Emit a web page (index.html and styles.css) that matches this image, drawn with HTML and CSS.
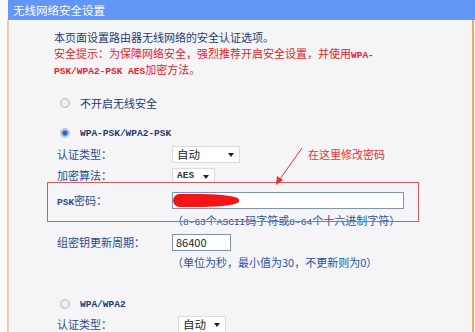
FILE: index.html
```html
<!DOCTYPE html>
<html lang="zh-CN">
<head>
    <meta charset="UTF-8">
    <meta name="viewport" content="width=device-width, initial-scale=1.0">
    <title>无线网络安全设置</title>
    <link rel="stylesheet" href="styles.css">
</head>
<body>
    <div class="title-bar">无线网络安全设置</div>

    <div class="panel">
        <div class="intro">
            <p>本页面设置路由器无线网络的安全认证选项。</p>
            <p class="warn">安全提示：为保障网络安全，强烈推荐开启安全设置，并使用<span class="mono">WPA-</span></p>
            <p class="warn"><span class="mono">PSK/WPA2-PSK AES</span>加密方法。</p>
        </div>

        <div class="radio-row first">
            <span class="radio"></span>
            <span>不开启无线安全</span>
        </div>

        <div class="radio-row second">
            <span class="radio checked"></span>
            <span class="mono">WPA-PSK/WPA2-PSK</span>
        </div>

        <div class="field-row auth">
            <span class="label">认证类型：</span>
            <span class="select wide">自动<i class="caret"></i></span>
        </div>

        <div class="field-row enc">
            <span class="label">加密算法：</span>
            <span class="select narrow"><span class="mono">AES</span><i class="caret"></i></span>
        </div>

        <div class="field-row psk">
            <span class="label"><span class="mono">PSK</span>密码：</span>
            <span class="input long"><span class="scribble"></span></span>
        </div>

        <div class="hint-row">（<span class="mono">8-63</span>个<span class="mono">ASCII</span>码字符或<span class="mono">8-64</span>个十六进制字符）</div>

        <div class="field-row gk">
            <span class="label">组密钥更新周期：</span>
            <span class="input short">86400</span>
        </div>

        <div class="hint-row">（单位为秒，最小值为30，不更新则为0）</div>

        <div class="radio-row third">
            <span class="radio"></span>
            <span class="mono">WPA/WPA2</span>
        </div>

        <div class="field-row auth2">
            <span class="label">认证类型：</span>
            <span class="select mid">自动<i class="caret"></i></span>
        </div>
    </div>

    <!-- annotation drawn on top of the form -->
    <div class="mark-box"></div>
    <div class="mark-text">在这里修改密码</div>
    <svg class="mark-arrow" width="475" height="332" viewBox="0 0 475 332">
        <line x1="302" y1="148" x2="280" y2="179" stroke="#e8312e" stroke-width="1"/>
        <polygon points="276,185 277,176 283,180" fill="#e8312e"/>
    </svg>
</body>
</html>
```

FILE: styles.css
```css
* {
    margin: 0;
    padding: 0;
    box-sizing: border-box;
}
html, body {
    height: 100%;
}
body {
    position: relative;
    overflow: hidden;
    background: #fafafa;
    font-family: "Noto Sans CJK SC", "Liberation Sans", sans-serif;
    font-size: 11px;
    color: #24438a;
}
.mono {
    font-family: "Liberation Mono", monospace;
    font-size: 9.5px;
    font-weight: bold;
}
.title-bar {
    height: 20px;
    margin-left: 8px;
    padding-left: 5px;
    background: #6496f6;
    color: #fff;
    font-size: 11.5px;
    line-height: 20px;
}
.panel {
    margin-left: 7px;
    margin-right: 1px;
    height: 312px;
    padding-left: 45px;
    background: #f5f5f7;
    border-left: 2px solid #e8d0a6;
    border-right: 2px solid #f3a862;
}
.intro {
    padding-top: 9px;
    color: #1d3a78;
}
.intro p {
    height: 16px;
    line-height: 16px;
}
.warn {
    color: #e5231f;
}
.radio-row {
    display: flex;
    align-items: center;
    height: 20px;
    padding-left: 6px;
    color: #1d3a78;
}
.radio-row.first { margin-top: 16px; }
.radio-row.second { margin-top: 10px; }
.radio-row.third { margin-top: 24px; }
.radio {
    width: 10px;
    height: 10px;
    margin-right: 10px;
    border: 1px solid #b9bcc2;
    border-radius: 50%;
    background: radial-gradient(circle, #f2f2f2 30%, #d8dadf 100%);
}
.radio.checked {
    background: radial-gradient(circle, #2f64c8 35%, #9fb6e0 55%, #dfe2e8 70%);
}
.field-row {
    display: flex;
    align-items: center;
    height: 18px;
}
.field-row.auth { margin-top: 2px; }
.field-row.enc { margin-top: 3px; }
.field-row.psk { margin-top: 7px; }
.field-row.gk { margin-top: 5px; }
.field-row.auth2 { margin-top: 1px; }
.label {
    width: 118px;
    padding-left: 3px;
    color: #2a4990;
}
.select {
    position: relative;
    display: flex;
    align-items: center;
    height: 17px;
    padding-left: 4px;
    background: #fff;
    border: 1px solid #dcdcdc;
    color: #222;
    font-size: 11.5px;
}
.select.wide { width: 68px; }
.select.narrow { width: 43px; height: 15px; }
.select.mid { width: 48px; margin-left: 6px; }
.select .mono {
    color: #333;
}
.caret {
    position: absolute;
    right: 5px;
    top: 6px;
    border-left: 3.5px solid transparent;
    border-right: 3.5px solid transparent;
    border-top: 4px solid #222;
}
.input {
    position: relative;
    height: 17px;
    padding-left: 3px;
    background: #fff;
    border: 1px solid #7f93b4;
    color: #222;
    line-height: 15px;
}
.input.long { width: 232px; }
.input.short { width: 59px; }
.scribble {
    position: absolute;
    left: 0;
    top: 1px;
    width: 66px;
    height: 13px;
    background: #f31515;
    border-radius: 7px 40px 40px 7px / 7px 6px 6px 7px;
}
.hint-row {
    height: 16px;
    margin-top: 3px;
    margin-left: 118px;
    line-height: 16px;
    color: #2c52a2;
}
.hint-row .mono {
    font-weight: normal;
}
.mark-box {
    position: absolute;
    left: 47px;
    top: 182px;
    width: 372px;
    height: 40px;
    border: 1px solid #e0575a;
}
.mark-text {
    position: absolute;
    left: 308px;
    top: 146px;
    color: #e8312e;
    font-size: 11px;
    line-height: 16px;
}
.mark-arrow {
    position: absolute;
    left: 0;
    top: 0;
}
```
